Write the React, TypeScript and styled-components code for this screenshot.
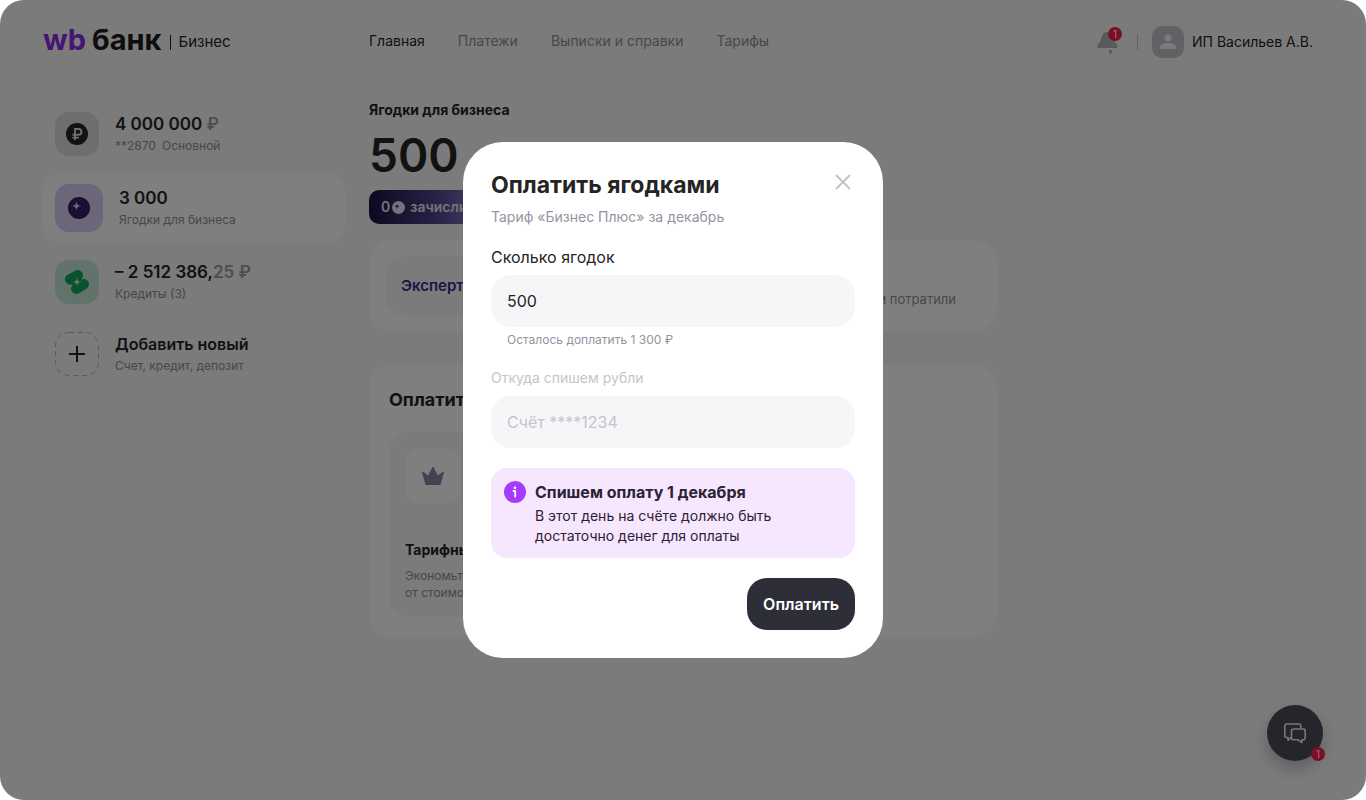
import React, { useState } from "react";
import styled, { createGlobalStyle } from "styled-components";

const GlobalStyle = createGlobalStyle`
  *, *::before, *::after { box-sizing: border-box; }
  body {
    margin: 0;
    background: #ffffff;
    color: #242424;
    font-family: Inter, "Noto Sans", sans-serif;
    font-size: 15px;
    line-height: 20px;
  }
  h1, h2, h3, p, ul { margin: 0; padding: 0; }
  button, input { font: inherit; color: inherit; }
`;

const Page = styled.div`
  min-height: 100vh;
  background: #f7f7f7;
  border-radius: 24px;
`;

const Header = styled.header`
  display: grid;
  grid-template-columns: 302px minmax(0, 1fr) auto;
  column-gap: 24px;
  align-items: center;
  height: 84px;
  padding: 0 53px 0 43px;
`;

const Logo = styled.a`
  display: flex;
  align-items: center;
  color: #242424;
  text-decoration: none;
`;

const Wordmark = styled.span<{ $accent?: boolean }>`
  padding-bottom: 4px;
  font-size: 29px;
  line-height: 36px;
  font-weight: 700;
  margin-right: ${(p) => (p.$accent ? 6 : 9)}px;
  color: ${(p) => (p.$accent ? "#8b2be8" : "#1c1c1c")};
`;

const LogoRule = styled.span`
  width: 1px;
  height: 15px;
  margin-right: 7px;
  background: #242424;
`;

const Nav = styled.nav`
  display: flex;
  gap: 33px;
  padding-bottom: 2px;
`;

const NavLink = styled.a<{ $active?: boolean }>`
  font-size: 14px;
  color: ${(p) => (p.$active ? "#242424" : "#8e8e98")};
  text-decoration: none;
  white-space: nowrap;
`;

const Account = styled.div`
  display: flex;
  align-items: center;
  font-size: 14px;
`;

const BellButton = styled.button`
  position: relative;
  display: flex;
  width: 26px;
  height: 32px;
  padding: 4px 0 0;
  border: 0;
  background: none;
`;

const CountBadge = styled.span<{ $top: number; $right: number }>`
  position: absolute;
  top: ${(p) => p.$top}px;
  right: ${(p) => p.$right}px;
  width: 14px;
  height: 14px;
  border-radius: 50%;
  background: #ff1a4d;
  color: #ffffff;
  font-size: 10px;
  line-height: 14px;
  text-align: center;
`;

const HeaderRule = styled.span`
  width: 1px;
  height: 16px;
  margin: 0 14px;
  background: #c4c4cc;
`;

const Avatar = styled.span`
  display: grid;
  place-items: center;
  width: 32px;
  height: 32px;
  margin-right: 8px;
  border-radius: 10px;
  background: #c3c5cd;
`;

const Body = styled.div`
  display: grid;
  grid-template-columns: 302px minmax(0, 628px);
  column-gap: 24px;
  padding: 16px 52px 40px 43px;
`;

const AccountList = styled.ul`
  display: flex;
  flex-direction: column;
  gap: 4px;
  list-style: none;
`;

const AccountItem = styled.li<{ $selected?: boolean }>`
  display: flex;
  align-items: center;
  gap: 16px;
  padding: 12px;
  border-radius: 20px;
  background: ${(p) => (p.$selected ? "#ffffff" : "transparent")};
`;

const Tile = styled.span<{ $size: number; $bg: string }>`
  display: grid;
  place-items: center;
  flex: none;
  width: ${(p) => p.$size}px;
  height: ${(p) => p.$size}px;
  border-radius: 14px;
  background: ${(p) => p.$bg};
`;

const Amount = styled.div`
  font-size: 17px;
  line-height: 24px;
  font-weight: 600;
`;

const AddTitle = styled(Amount)`
  font-size: 16px;
`;

const Faint = styled.span`
  color: #9898a4;
`;

const Caption = styled.div`
  display: flex;
  gap: 6px;
  font-size: 12px;
  line-height: 20px;
  color: #8e8e98;
`;

const Content = styled.main`
  display: flex;
  flex-direction: column;
  align-items: flex-start;
`;

const ContentTitle = styled.h1`
  font-size: 14px;
  line-height: 20px;
  font-weight: 700;
`;

const Balance = styled.div`
  margin: 5px 0;
  font-size: 46px;
  line-height: 60px;
  font-weight: 600;
`;

const Cashback = styled.div`
  display: flex;
  align-items: center;
  gap: 2px;
  height: 34px;
  padding: 0 12px;
  border-radius: 10px;
  background: linear-gradient(90deg, #1c1240 0, #4a3d86 60px, #8576c8 110px);
  color: #e8e4f4;
  font-size: 14px;
  font-weight: 600;
  white-space: nowrap;
`;

const CashbackText = styled.span`
  margin-left: 3px;
`;

const Card = styled.section`
  width: 100%;
  border-radius: 24px;
  background: #ffffff;
`;

const LevelCard = styled(Card)`
  display: flex;
  justify-content: space-between;
  margin-top: 16px;
  padding: 16px 41px 16px 16px;
`;

const Level = styled.div`
  width: 200px;
  padding: 20px 16px;
  border-radius: 20px;
  background: #f6f6f7;
  color: #3c2c84;
  font-weight: 600;
`;

const LevelNote = styled.p`
  align-self: flex-end;
  padding-bottom: 7px;
  font-size: 13px;
  color: #8e8e98;
`;

const PayCard = styled(Card)`
  margin-top: 32px;
  padding: 20px;
`;

const PayTitle = styled.h2`
  font-size: 18px;
  line-height: 32px;
  font-weight: 700;
`;

const Offer = styled.article`
  width: 200px;
  margin-top: 16px;
  padding: 16px;
  border-radius: 20px;
  background: #f6f6f7;
`;

const OfferIcon = styled.div`
  display: grid;
  place-items: center;
  width: 56px;
  height: 56px;
  border-radius: 16px;
  background: #ffffff;
`;

const OfferTitle = styled.h3`
  margin-top: 36px;
  font-size: 14px;
  line-height: 20px;
  font-weight: 700;
`;

const OfferText = styled.p`
  margin-top: 7px;
  font-size: 12px;
  line-height: 17px;
  color: #8e8e98;
`;

const ChatButton = styled.button`
  position: fixed;
  right: 43px;
  bottom: 39px;
  display: grid;
  place-items: center;
  width: 56px;
  height: 56px;
  padding: 0;
  border: 0;
  border-radius: 50%;
  background: #4b4a57;
  box-shadow: 0 8px 16px rgba(60, 60, 80, 0.3);
`;

const Backdrop = styled.div`
  position: fixed;
  inset: 0;
  display: flex;
  align-items: center;
  justify-content: center;
  padding-right: 20px;
  border-radius: 24px;
  background: rgba(0, 0, 0, 0.5);
`;

const Modal = styled.form`
  display: flex;
  flex-direction: column;
  width: 420px;
  padding: 28px;
  border-radius: 40px;
  background: #ffffff;
`;

const ModalHeader = styled.div`
  display: flex;
  justify-content: space-between;
  align-items: flex-start;
`;

const ModalTitle = styled.h2`
  font-size: 23px;
  line-height: 30px;
  font-weight: 700;
`;

const CloseButton = styled.button`
  display: grid;
  place-items: center;
  width: 24px;
  height: 24px;
  padding: 0;
  border: 0;
  background: none;
`;

const ModalSubtitle = styled.p`
  margin-top: 7px;
  font-size: 14px;
  line-height: 20px;
  color: #93949f;
`;

const Label = styled.label<{ $muted?: boolean }>`
  margin-top: ${(p) => (p.$muted ? 18 : 20)}px;
  font-size: ${(p) => (p.$muted ? 14 : 16)}px;
  line-height: 20px;
  color: ${(p) => (p.$muted ? "#c4c5cd" : "#242424")};
`;

const TextInput = styled.input`
  width: 100%;
  height: 52px;
  margin-top: 8px;
  padding: 0 16px;
  border: 0;
  border-radius: 20px;
  outline: none;
  background: #f6f6f9;
  font-size: 16px;
  &:disabled { color: #c4c5cd; }
`;

const Hint = styled.p`
  padding: 3px 16px 0;
  font-size: 12px;
  line-height: 20px;
  color: #93949f;
`;

const Notice = styled.div`
  display: flex;
  gap: 9px;
  margin-top: 20px;
  padding: 13px 13px 12px;
  border-radius: 16px;
  background: #f6e6fe;
  color: #2b2233;
`;

const NoticeTitle = styled.h3`
  font-size: 16px;
  line-height: 22px;
  font-weight: 700;
`;

const NoticeText = styled.p`
  margin-top: 3px;
  font-size: 14px;
  line-height: 20px;
`;

const PayButton = styled.button`
  align-self: flex-end;
  height: 52px;
  margin-top: 20px;
  padding: 0 16px;
  border: 0;
  border-radius: 20px;
  background: #2e2e38;
  color: #ffffff;
  font-size: 16px;
  font-weight: 600;
`;

const BellIcon = () => (
  <svg width="24" height="26" viewBox="0 0 24 26" fill="#b2b4bc">
    <path d="M10 2h3.500c1.500 0 2.300.9 2.700 2.400l1.300 6.100c.3 1.400.9 2.500 1.900 3.500l.8.900c1.100 1.300.4 3.100-1.300 3.100H1.600c-1.600 0-2.200-1.800-1.200-2.900l1.400-1.600c.9-1 1.400-2 1.800-3.300l1.700-5.500C6.100 3 7.700 2 10 2z" />
    <circle cx="13.500" cy="21.800" r="2" />
  </svg>
);

const UserIcon = () => (
  <svg width="18" height="18" viewBox="0 0 18 18" fill="#f4f4f6">
    <circle cx="9" cy="5" r="3.500" />
    <path d="M1 14.500c0-3.200 3.600-4.500 8-4.500s8 1.300 8 4.500c0 1-.5 1.500-1.500 1.500h-13C1.500 16 1 15.500 1 14.500z" />
  </svg>
);

const RubleIcon = () => (
  <svg width="22" height="22" viewBox="0 0 22 22">
    <circle cx="11" cy="11" r="11" fill="#242424" />
    <path d="M9 17V6h3.500a2.900 2.900 0 0 1 0 5.800H6.500M6.500 14.600h6.500" fill="none" stroke="#dcdce2" strokeWidth="1.900" />
  </svg>
);

const BerryIcon = ({ size, fill, star }: { size: number; fill: string; star: string }) => (
  <svg width={size} height={size} viewBox="0 0 22 22">
    <circle cx="11" cy="11" r="11" fill={fill} />
    <path d="M8.500 4.500c.6 3 1.500 4 4.500 4.500-3 .6-3.900 1.500-4.500 4.500C7.900 10.500 7 9.600 4 9c3-.5 3.900-1.500 4.500-4.500z" fill={star} />
  </svg>
);

const CreditIcon = () => (
  <svg width="24" height="24" viewBox="0 0 24 24">
    <path
      d="M5.200 9.400 12.800 5.200M11.200 18.800 18.800 14.200M9 9.500 15 14.500"
      fill="none"
      stroke="#12a758"
      strokeWidth="10.400"
      strokeLinecap="round"
    />
    <path d="M12 7.800c.5 3 1.200 3.700 4.200 4.200-3 .5-3.700 1.200-4.200 4.200-.5-3-1.200-3.700-4.200-4.200 3-.5 3.700-1.200 4.200-4.200z" fill="#d2efe0" />
  </svg>
);

const AddIcon = () => (
  <svg width="44" height="44" viewBox="0 0 44 44" fill="none">
    <rect x=".5" y=".5" width="43" height="43" rx="13.500" stroke="#b4b4bc" strokeDasharray="5 4" />
    <path d="M22 14v16M14 22h16" stroke="#242424" strokeWidth="2" />
  </svg>
);

const CrownIcon = () => (
  <svg width="24" height="20" viewBox="0 0 24 20" fill="#8584a0">
    <path d="M4.600 19 1 6.600c-.2-.8.500-1.200 1.100-.8L7.200 9.600 11.300 1.400c.3-.6 1.100-.6 1.400 0l4.100 8.200 5.100-3.800c.6-.4 1.300 0 1.100.8L19.400 19z" />
  </svg>
);

const ChatIcon = () => (
  <svg width="24" height="24" viewBox="0 0 24 24" fill="none" stroke="#f0f0f2" strokeWidth="1.600" strokeLinejoin="round" strokeLinecap="round">
    <path d="M17.800 7.500V5a2 2 0 0 0-2-2H3.800a2 2 0 0 0-2 2v9.500a2 2 0 0 0 2 2H5v2.800l3.200-2.800" />
    <path d="M10.500 8h9.700a2 2 0 0 1 2 2v6.700a2 2 0 0 1-2 2h-1.400v3l-4-3h-4.300a2 2 0 0 1-2-2V10a2 2 0 0 1 2-2z" />
  </svg>
);

const CloseIcon = () => (
  <svg width="16" height="16" viewBox="0 0 16 16" stroke="#c0c1c9" strokeWidth="1.800" strokeLinecap="round">
    <path d="M1.500 1.500l13 13M14.500 1.500l-13 13" />
  </svg>
);

const InfoIcon = () => (
  <svg width="22" height="22" viewBox="0 0 22 22">
    <circle cx="11" cy="11" r="11" fill="#a73afd" />
    <circle cx="11" cy="6.800" r="1.300" fill="#fff" />
    <path d="M9.500 10H11.200v5.500" fill="none" stroke="#fff" strokeWidth="1.800" strokeLinecap="round" strokeLinejoin="round" />
  </svg>
);

const navItems = ["Главная", "Платежи", "Выписки и справки", "Тарифы"];

export default function App() {
  const [amount, setAmount] = useState("500");

  return (
    <>
      <GlobalStyle />
      <Page>
        <Header>
          <Logo href="#">
            <Wordmark $accent>wb</Wordmark>
            <Wordmark>банк</Wordmark>
            <LogoRule />
            Бизнес
          </Logo>
          <Nav>
            {navItems.map((item, i) => (
              <NavLink key={item} href="#" $active={i === 0}>
                {item}
              </NavLink>
            ))}
          </Nav>
          <Account>
            <BellButton type="button" aria-label="Уведомления">
              <BellIcon />
              <CountBadge $top={1} $right={1}>1</CountBadge>
            </BellButton>
            <HeaderRule />
            <Avatar>
              <UserIcon />
            </Avatar>
            ИП Васильев А.В.
          </Account>
        </Header>

        <Body>
          <AccountList>
            <AccountItem>
              <Tile $size={44} $bg="#dcdce2">
                <RubleIcon />
              </Tile>
              <div>
                <Amount>
                  4 000 000 <Faint>₽</Faint>
                </Amount>
                <Caption>
                  <span>**2870</span>
                  <span>Основной</span>
                </Caption>
              </div>
            </AccountItem>
            <AccountItem $selected>
              <Tile $size={48} $bg="#d9cdf3">
                <BerryIcon size={22} fill="#321c66" star="#d9cdf3" />
              </Tile>
              <div>
                <Amount>3 000</Amount>
                <Caption>Ягодки для бизнеса</Caption>
              </div>
            </AccountItem>
            <AccountItem>
              <Tile $size={44} $bg="#c4e6d6">
                <CreditIcon />
              </Tile>
              <div>
                <Amount>
                  – 2 512 386,<Faint>25 ₽</Faint>
                </Amount>
                <Caption>Кредиты (3)</Caption>
              </div>
            </AccountItem>
            <AccountItem>
              <Tile $size={44} $bg="transparent">
                <AddIcon />
              </Tile>
              <div>
                <AddTitle>Добавить новый</AddTitle>
                <Caption>Счет, кредит, депозит</Caption>
              </div>
            </AccountItem>
          </AccountList>

          <Content>
            <ContentTitle>Ягодки для бизнеса</ContentTitle>
            <Balance>500</Balance>
            <Cashback>
              0
              <BerryIcon size={13} fill="#e8e4f4" star="#2a1f55" />
              <CashbackText>зачислим</CashbackText>
            </Cashback>
            <LevelCard>
              <Level>Эксперт</Level>
              <LevelNote>и потратили</LevelNote>
            </LevelCard>
            <PayCard>
              <PayTitle>Оплатить</PayTitle>
              <Offer>
                <OfferIcon>
                  <CrownIcon />
                </OfferIcon>
                <OfferTitle>Тарифный план</OfferTitle>
                <OfferText>
                  Экономьте
                  <br />
                  от стоимости
                </OfferText>
              </Offer>
            </PayCard>
          </Content>
        </Body>

        <ChatButton type="button" aria-label="Чат">
          <ChatIcon />
          <CountBadge $top={42} $right={-2}>1</CountBadge>
        </ChatButton>
      </Page>

      <Backdrop>
        <Modal role="dialog" aria-modal="true" aria-labelledby="pay-title" onSubmit={(e) => e.preventDefault()}>
          <ModalHeader>
            <ModalTitle id="pay-title">Оплатить ягодками</ModalTitle>
            <CloseButton type="button" aria-label="Закрыть">
              <CloseIcon />
            </CloseButton>
          </ModalHeader>
          <ModalSubtitle>Тариф «Бизнес Плюс» за декабрь</ModalSubtitle>
          <Label htmlFor="amount">Сколько ягодок</Label>
          <TextInput id="amount" value={amount} onChange={(e) => setAmount(e.target.value)} />
          <Hint>Осталось доплатить 1 300 ₽</Hint>
          <Label htmlFor="source" $muted>
            Откуда спишем рубли
          </Label>
          <TextInput id="source" value="Счёт ****1234" disabled readOnly />
          <Notice>
            <InfoIcon />
            <div>
              <NoticeTitle>Спишем оплату 1 декабря</NoticeTitle>
              <NoticeText>
                В этот день на счёте должно быть
                <br />
                достаточно денег для оплаты
              </NoticeText>
            </div>
          </Notice>
          <PayButton type="submit">Оплатить</PayButton>
        </Modal>
      </Backdrop>
    </>
  );
}
